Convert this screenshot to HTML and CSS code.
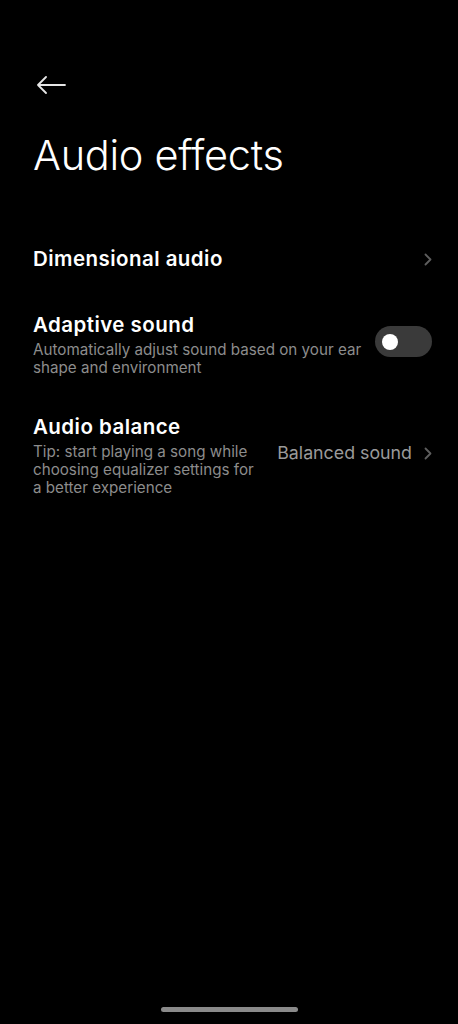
FILE: index.html
```html
<!DOCTYPE html>
<html>
	<head>
		<meta charset="utf-8">
		<title>Audio effects</title>
		<link rel="stylesheet" href="styles.css">
	</head>
	<body>
		<div class="screen">
			<div class="topbar">
				<svg class="back" width="30" height="18" viewBox="0 0 30 18">
					<path d="M29 9H2M10 1L2 9l8 8" fill="none" stroke="#e6e6e6" stroke-width="1.8" stroke-linecap="round" stroke-linejoin="round"/>
				</svg>
			</div>
			<h1>Audio effects</h1>

			<div class="list">
				<div class="item single">
					<div class="text">
						<div class="title">Dimensional audio</div>
					</div>
					<span class="chev">
						<svg width="8" height="13" viewBox="0 0 8 13"><path d="M1.5 1.5l5 5-5 5" fill="none" stroke="#5e5e5e" stroke-width="1.8" stroke-linecap="round" stroke-linejoin="round"/></svg>
					</span>
				</div>

				<div class="item">
					<div class="text">
						<div class="title">Adaptive sound</div>
						<div class="sub">Automatically adjust sound based on your ear shape and environment</div>
					</div>
					<div class="toggle"><span class="knob"></span></div>
				</div>

				<div class="item top">
					<div class="text narrow">
						<div class="title">Audio balance</div>
						<div class="sub">Tip: start playing a song while choosing equalizer settings for a better experience</div>
					</div>
					<div class="value">Balanced sound</div>
					<span class="chev">
						<svg width="8" height="13" viewBox="0 0 8 13"><path d="M1.5 1.5l5 5-5 5" fill="none" stroke="#5e5e5e" stroke-width="1.8" stroke-linecap="round" stroke-linejoin="round"/></svg>
					</span>
				</div>
			</div>

			<div class="homebar"></div>
		</div>
	</body>
</html>
```

FILE: styles.css
```css
html,body{
	margin:0;
	padding:0;
	background:#000;
}
.screen{
	width:458px;
	height:1024px;
	display:flex;
	flex-direction:column;
	font-family:"Inter","Roboto","Noto Sans",sans-serif;
	color:#fff;
}
.topbar{
	height:48px;
	padding:62px 0 0 36px;
	display:flex;
	align-items:flex-start;
}
.back{margin-top:14px;}
h1{
	margin:20px 0 0 33px;
	font-size:41.5px;
	font-weight:300;
	letter-spacing:-0.3px;
	line-height:50px;
}
.list{
	margin-top:66px;
	display:flex;
	flex-direction:column;
	gap:37px;
}
.item{
	display:flex;
	align-items:center;
	padding:0 26px 0 33px;
}
.item.single{margin-bottom:3px;}
.item.top{align-items:flex-start;}
.text{flex:1;}
.text.narrow{flex:0 0 232px;margin-right:auto;}
.title{
	font-size:20.5px;
	font-weight:600;
	line-height:26px;
	letter-spacing:0.45px;
}
.sub{
	font-size:15.2px;
	color:#8c8c8c;
	line-height:18px;
	margin-top:3px;
	padding-right:8px;
}
.chev{
	display:flex;
	width:8px;
	margin-left:12px;
}
.item.top .chev{margin-top:33px;}
.value{
	font-size:17.8px;
	color:#9a9a9a;
	line-height:24px;
	margin-top:27px;
}
.toggle{
	width:57px;
	height:31px;
	border-radius:16px;
	background:#3a3a3a;
	display:flex;
	align-items:center;
	padding-left:7px;
	box-sizing:border-box;
	margin-top:-6px;
}
.knob{
	width:16px;
	height:16px;
	border-radius:50%;
	background:#fff;
}
.homebar{
	margin:auto auto 12px auto;
	width:137px;
	height:5px;
	border-radius:3px;
	background:#8a8a8a;
}
```
